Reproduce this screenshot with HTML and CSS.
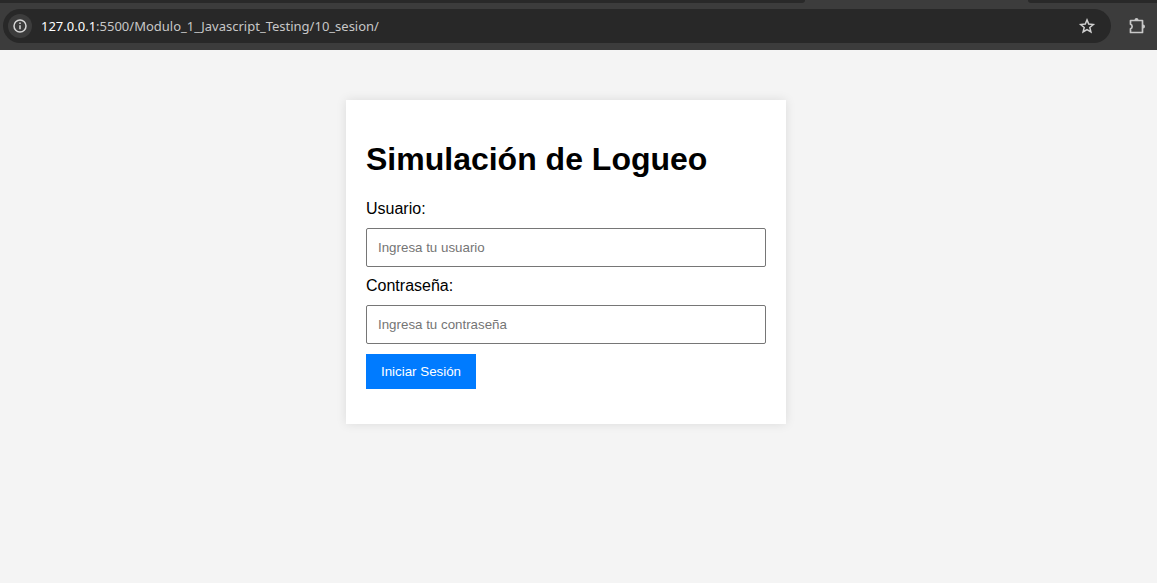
FILE: index.html
```html
<!DOCTYPE html>
<html lang="es">
<head>
<meta charset="utf-8">
<title>Simulación de Logueo</title>
<link rel="stylesheet" href="styles.css">
</head>
<body>
<header class="browser">
  <div class="tabs"><span class="tabs-left"></span><span class="tabs-right"></span></div>
  <div class="toolbar">
    <div class="address">
      <button class="info" type="button" aria-label="Información del sitio">
        <svg width="16" height="16" viewBox="0 0 16 16" fill="none" stroke="#d6d6d6" stroke-width="1.5"><circle cx="8" cy="8" r="6"/><path d="M8 7.2v4M8 4.6v1.5"/></svg>
      </button>
      <span class="url"><span class="host">127.0.0.1</span>:5500/Modulo_1_Javascript_Testing/10_sesion/</span>
      <button class="icon" type="button" aria-label="Añadir a marcadores">
        <svg width="18" height="18" viewBox="0 0 18 18" fill="none" stroke="#d0d0d0" stroke-width="1.5"><path d="M9 2.9l1.7 4.2 4.6.4-3.5 3 1.1 4.5L9 12.6 5.1 15l1.1-4.5-3.5-3 4.6-.4z"/></svg>
      </button>
    </div>
    <button class="icon" type="button" aria-label="Extensiones">
      <svg width="20" height="20" viewBox="0 0 20 20"><path d="M4.500 4.500H15.500V16.500H3.500v-3.800a2.300 2.300 0 0 0 0-4.400V4.500z" fill="none" stroke="#c8c8c8" stroke-width="1.700" stroke-linejoin="round"/><path d="M7.500 4a2 2 0 0 1 4 0zM16 8.500a2 2 0 0 1 0 4z" fill="#c8c8c8"/></svg>
    </button>
  </div>
</header>
<main class="page">
  <form class="card">
    <h1 class="title">Simulación de Logueo</h1>
    <label class="label" for="usuario">Usuario:</label>
    <input class="field" id="usuario" type="text" placeholder="Ingresa tu usuario">
    <label class="label" for="clave">Contraseña:</label>
    <input class="field" id="clave" type="password" placeholder="Ingresa tu contraseña">
    <button class="submit" type="button">Iniciar Sesión</button>
  </form>
</main>
</body>
</html>
```
FILE: styles.css
```css
* {
  box-sizing: border-box;
}

body {
  margin: 0;
  background: #f4f4f4;
  font-family: "Liberation Sans", Arial, sans-serif;
}

.browser {
  background: #3c3c3c;
}

.tabs {
  display: flex;
  justify-content: space-between;
  height: 3px;
}

.tabs-left,
.tabs-right {
  background: #292929;
}

.tabs-left {
  width: 805px;
  border-bottom-right-radius: 4px;
}

.tabs-right {
  width: 129px;
  border-bottom-left-radius: 4px;
}

.toolbar {
  display: flex;
  align-items: center;
  gap: 16px;
  padding: 6px 10px 7px 3px;
}

.address {
  display: flex;
  flex: 1;
  align-items: center;
  height: 34px;
  padding: 0 15px 0 5px;
  border-radius: 17px;
  background: #282828;
}

.info,
.icon {
  display: flex;
  align-items: center;
  justify-content: center;
  padding: 0;
  border: 0;
  background: none;
}

.info {
  width: 24px;
  height: 24px;
  border-radius: 50%;
  background: #3c3c3c;
}

.url {
  flex: 1;
  margin-left: 9px;
  color: #c7c7c7;
  font: 13px/20px "Noto Sans", "Open Sans", sans-serif;
}

.host {
  color: #fff;
}

.page {
  padding: 50px 25px 50px 0;
}

.card {
  max-width: 440px;
  margin: 0 auto;
  padding: 20px 20px 35px;
  background: #fff;
  box-shadow: 0 0 10px rgba(0, 0, 0, 0.1);
}

.title {
  margin: 21px 0 22px;
  font-size: 32px;
  line-height: 37px;
}

.label {
  display: block;
  font-size: 16px;
  line-height: 18px;
}

.field,
.submit {
  font-family: "Liberation Sans", Arial, sans-serif;
}

.field {
  display: block;
  width: 100%;
  height: 39px;
  margin: 10px 0;
  padding: 10px 11px;
  border: 1px solid #767676;
  border-radius: 2px;
}

.field::placeholder {
  color: #757575;
}

.submit {
  padding: 10px 15px;
  border: 0;
  background: #007bff;
  color: #fff;
  line-height: 15px;
}
```
